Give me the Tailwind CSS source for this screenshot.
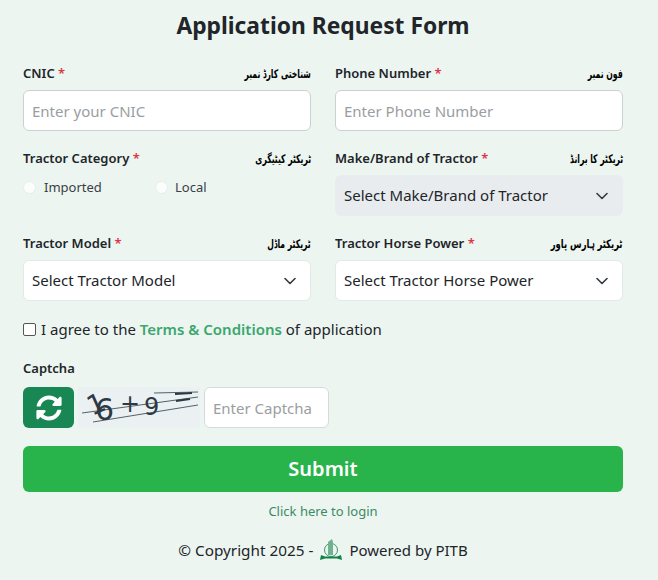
<!DOCTYPE html>
<html lang="en">
<head>
    <meta charset="UTF-8">
    <meta name="viewport" content="width=device-width, initial-scale=1.0">
    <title>Application Request Form</title>
    <script src="https://cdn.jsdelivr.net/npm/@tailwindcss/browser@4"></script>
</head>
<body class="h-[580px] overflow-hidden bg-[#edf5f1] font-['Noto_Sans',sans-serif] text-[#212529]">
    <div class="w-[600px] ml-[23px]">
        <h1 class="h-[52px] pt-[8px] text-center text-[22.8px] leading-[36px] font-bold">Application Request Form</h1>

        <div class="grid grid-cols-2 gap-x-[24px] pt-[10px]">
            <!-- CNIC -->
            <div class="h-[85px]">
                <div class="flex justify-between h-[28px] pb-[4px] items-center">
                    <span class="text-[13px] font-semibold">CNIC <span class="text-[#dc3545]">*</span></span>
                    <span dir="rtl" class="origin-right scale-x-[.64] text-[12px] font-bold text-black font-['DejaVu_Sans',sans-serif]">شناختی کارڈ نمبر</span>
                </div>
                <input type="text" placeholder="Enter your CNIC" class="w-full h-[41px] px-[8px] bg-white border border-[#ccd0d3] rounded-[6px] text-[15px] placeholder:text-[#9a9ea2]">
            </div>
            <!-- Phone -->
            <div class="h-[85px]">
                <div class="flex justify-between h-[28px] pb-[4px] items-center">
                    <span class="text-[13px] font-semibold">Phone Number <span class="text-[#dc3545]">*</span></span>
                    <span dir="rtl" class="origin-right scale-x-[.64] text-[12px] font-bold text-black font-['DejaVu_Sans',sans-serif]">فون نمبر</span>
                </div>
                <input type="text" placeholder="Enter Phone Number" class="w-full h-[41px] px-[8px] bg-white border border-[#ccd0d3] rounded-[6px] text-[15px] placeholder:text-[#9a9ea2]">
            </div>
            <!-- Category -->
            <div class="h-[85px]">
                <div class="flex justify-between h-[28px] pb-[4px] items-center">
                    <span class="text-[13px] font-semibold">Tractor Category <span class="text-[#dc3545]">*</span></span>
                    <span dir="rtl" class="origin-right scale-x-[.64] text-[12px] font-bold text-black font-['DejaVu_Sans',sans-serif]">ٹریکٹر کیٹیگری</span>
                </div>
                <div class="flex items-center h-[29px] -mt-[2px] text-[13px] text-[#3a3f44]">
                    <span class="w-[13px] h-[13px] rounded-full bg-white/80 border border-[#e6eeea]"></span>
                    <span class="ml-[8px] w-[56px]">Imported</span>
                    <span class="ml-[55px] w-[13px] h-[13px] rounded-full bg-white/80 border border-[#e6eeea]"></span>
                    <span class="ml-[7px]">Local</span>
                </div>
            </div>
            <!-- Make -->
            <div class="h-[85px]">
                <div class="flex justify-between h-[28px] pb-[4px] items-center">
                    <span class="text-[13px] font-semibold">Make/Brand of Tractor <span class="text-[#dc3545]">*</span></span>
                    <span dir="rtl" class="origin-right scale-x-[.64] text-[12px] font-bold text-black font-['DejaVu_Sans',sans-serif]">ٹریکٹر کا برانڈ</span>
                </div>
                <div class="flex items-center justify-between h-[41px] pl-[9px] pr-[15px] bg-[#e9ecef] rounded-[6px] text-[15px]">
                    <span>Select Make/Brand of Tractor</span>
                    <svg class="w-[12px] h-[8px]" viewBox="0 0 12 8" fill="none" stroke="#343a40" stroke-width="1.6" stroke-linecap="round" stroke-linejoin="round"><path d="M1 1.5l5 5 5-5"/></svg>
                </div>
            </div>
            <!-- Model -->
            <div class="h-[85px]">
                <div class="flex justify-between h-[28px] pb-[4px] items-center">
                    <span class="text-[13px] font-semibold">Tractor Model <span class="text-[#dc3545]">*</span></span>
                    <span dir="rtl" class="origin-right scale-x-[.64] text-[12px] font-bold text-black font-['DejaVu_Sans',sans-serif]">ٹریکٹر ماڈل</span>
                </div>
                <div class="flex items-center justify-between h-[41px] pl-[8px] pr-[14px] bg-white border border-[#e4e8e8] rounded-[6px] text-[15px]">
                    <span>Select Tractor Model</span>
                    <svg class="w-[12px] h-[8px]" viewBox="0 0 12 8" fill="none" stroke="#343a40" stroke-width="1.6" stroke-linecap="round" stroke-linejoin="round"><path d="M1 1.5l5 5 5-5"/></svg>
                </div>
            </div>
            <!-- Horse power -->
            <div class="h-[85px]">
                <div class="flex justify-between h-[28px] pb-[4px] items-center">
                    <span class="text-[13px] font-semibold">Tractor Horse Power <span class="text-[#dc3545]">*</span></span>
                    <span dir="rtl" class="origin-right scale-x-[.7] text-[12px] font-bold text-black font-['DejaVu_Sans',sans-serif]">ٹریکٹر ہارس پاور</span>
                </div>
                <div class="flex items-center justify-between h-[41px] pl-[8px] pr-[14px] bg-white border border-[#e4e8e8] rounded-[6px] text-[15px]">
                    <span>Select Tractor Horse Power</span>
                    <svg class="w-[12px] h-[8px]" viewBox="0 0 12 8" fill="none" stroke="#343a40" stroke-width="1.6" stroke-linecap="round" stroke-linejoin="round"><path d="M1 1.5l5 5 5-5"/></svg>
                </div>
            </div>
        </div>

        <!-- Terms -->
        <div class="flex items-center h-[24px] text-[15px]">
            <span class="w-[13px] h-[13px] bg-white border border-[#555] rounded-[2px]"></span>
            <span class="ml-[5px]">I agree to the <a class="font-semibold text-[#3aa76d]">Terms &amp; Conditions</a> of application</span>
        </div>

        <!-- Captcha -->
        <div class="mt-[18px] h-[20px] flex items-center text-[13px] font-semibold">Captcha</div>
        <div class="flex items-center gap-[4px] mt-[8px] h-[41px]">
            <button class="flex items-center justify-center w-[51px] h-[41px] bg-[#198754] rounded-[6px]">
                <svg class="w-[26px] h-[26px]" viewBox="0 0 512 512" fill="#fff"><path d="M370.7 133.3C339.5 104 298.9 88 255.8 88c-77.5.1-144.3 53.2-162.8 126.9-1.3 5.4-6.1 9.2-11.7 9.2H24.1c-7.5 0-13.2-6.8-11.8-14.2C33.9 94.9 134.8 8 256 8c66.4 0 126.8 26.1 171.3 68.7L463 41c15.1-15.1 41-4.4 41 17v134c0 13.3-10.7 24-24 24H346c-21.4 0-32.1-25.9-17-41l41.7-41.7zM32 296h134c21.4 0 32.1 25.9 17 41l-41.7 41.7c31.2 29.3 71.8 45.3 114.9 45.3 77.4-.1 144.3-53.1 162.8-126.8 1.3-5.4 6.1-9.2 11.7-9.2h57.3c7.5 0 13.2 6.8 11.8 14.2C478.1 417.1 377.2 504 256 504c-66.4 0-126.8-26.1-171.3-68.7L49 471c-15.1 15.1-41 4.4-41-17V320c0-13.3 10.7-24 24-24z"/></svg>
            </button>
            <svg class="w-[122px] h-[41px] bg-[#e9eff2]/70" viewBox="0 0 122 41" fill="none" stroke="#2d3a45">
                <text x="14" y="29" font-family="'DejaVu Sans',sans-serif" font-size="27" fill="#2d3a45" stroke="none" transform="rotate(-24 14 29)">1</text>
                <text x="17" y="33" font-family="'DejaVu Sans',sans-serif" font-size="30" fill="#2d3a45" stroke="none">6</text>
                <text x="42" y="25" font-family="'DejaVu Sans',sans-serif" font-size="24" fill="#2d3a45" stroke="none">+</text>
                <text x="66" y="28" font-family="'DejaVu Sans',sans-serif" font-size="24" fill="#2d3a45" stroke="none">9</text>
                <path d="M4 26L120 10M15 35L120 18M76 6L120 5" stroke-width="0.8"/>
                <path d="M97 7L114 6M98 14L112 12" stroke-width="1.8"/>
            </svg>
            <input type="text" placeholder="Enter Captcha" class="w-[125px] h-[41px] px-[8px] bg-white border border-[#d6dadc] rounded-[6px] text-[15px] placeholder:text-[#9a9ea2]">
        </div>

        <button class="block w-full h-[46px] mt-[18px] bg-[#28b44b] rounded-[6px] text-white text-[20px] font-semibold">Submit</button>

        <p class="mt-[9px] h-[20px] text-center text-[13px] leading-[20px] text-[#3c8a63]">Click here to login</p>

        <div class="flex items-center justify-center h-[28px] mt-[15px] text-[15px]">
            <span class="text-[15.3px]">© Copyright 2025 -</span>
            <svg class="w-[24px] h-[24px] mx-[6px]" viewBox="0 0 24 24">
                <circle cx="12" cy="12" r="6.5" fill="none" stroke="#2d8a5a" stroke-width="0.9"/>
                <path d="M9 4l4-3 1 3v13H9z" fill="#6fb290"/>
                <path d="M2 17l4 1.5h12l4-1.5 1 5-5-1.5H6l-5 1.5z" fill="#13814a"/>
            </svg>
            <span>Powered by PITB</span>
        </div>
    </div>
</body>
</html>
